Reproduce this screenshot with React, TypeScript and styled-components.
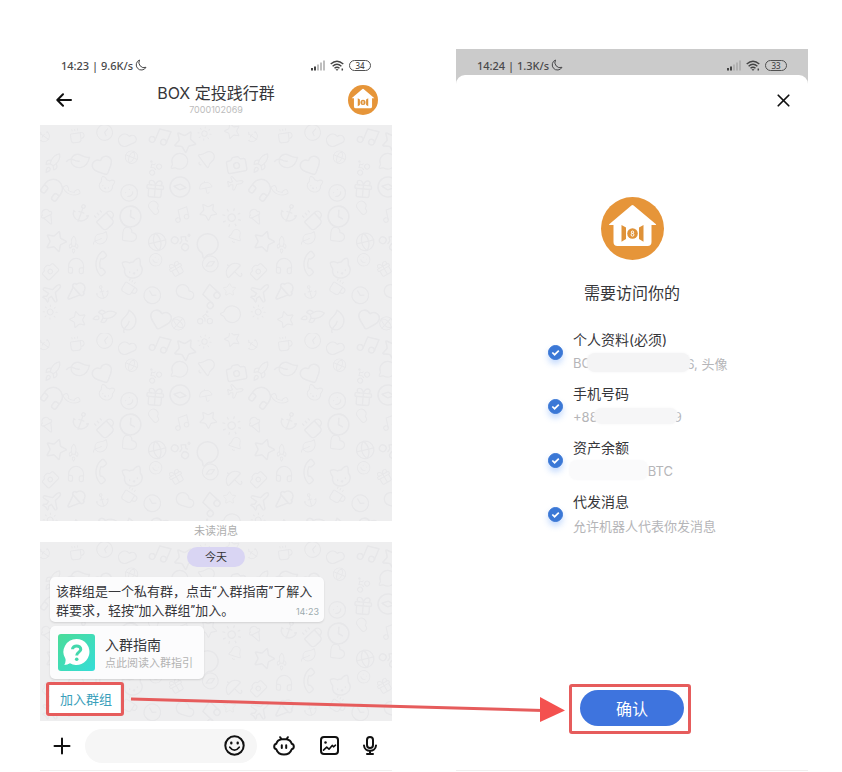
import React from 'react';
import styled, { createGlobalStyle, css } from 'styled-components';
import {
  Anchor, Bell, Bike, Camera, Cat, Clock, Cloud, Coffee, Compass, Gift, Globe, Headphones,
  Heart, IceCreamCone, Leaf, MessageCircle, Music, Phone, Plane, Rocket, Smile, Star, Sun, Umbrella, X,
} from 'lucide-react';

const GlobalStyle = createGlobalStyle`
  *, *::before, *::after { box-sizing: border-box; }
  body {
    margin: 0;
    background: #fff;
    color: #36363a;
    font-family: Inter, "Noto Sans CJK SC", sans-serif;
  }
  h1, h2, p, ul { margin: 0; padding: 0; font-weight: 400; }
  button, input { font: inherit; margin: 0; }
`;

const RED = '#e65c5c';

const Page = styled.main`
  position: relative;
  display: grid;
  grid-template-columns: 1fr 1fr;
  gap: 64px;
  min-height: 100vh;
  padding: 49px 34px 1px 40px;
`;

const Screen = styled.section<{ $dimmed?: boolean }>`
  display: flex;
  flex-direction: column;
  min-width: 0;
  border-bottom: 1px solid #f1efef;
  background: ${(p) => (p.$dimmed ? 'linear-gradient(#cbcbcb 60px, #fff 60px)' : '#fff')};
`;

const StatusBar = styled.div`
  display: flex;
  flex: none;
  align-items: center;
  justify-content: space-between;
  height: 32px;
  padding: 0 21px;
  font-family: "Noto Sans", sans-serif;
  font-size: 11px;
  font-weight: 500;
  color: #48484a;
`;

const StatusGroup = styled.div<{ $gap: number }>`
  display: flex;
  align-items: center;
  gap: ${(p) => p.$gap}px;
`;

const Battery = styled.span`
  width: 22px;
  height: 11px;
  border: 1px solid #505050;
  border-radius: 6px;
  font-size: 8px;
  line-height: 9px;
  text-align: center;
`;

const IconButton = styled.button<{ $width: number }>`
  display: flex;
  flex: none;
  align-items: center;
  justify-content: center;
  width: ${(p) => p.$width}px;
  height: 22px;
  padding: 0;
  border: 0;
  background: none;
  color: #111;
  cursor: pointer;
`;

const ChatHeader = styled.header`
  display: grid;
  flex: none;
  grid-template-columns: 30px 1fr 30px;
  align-items: center;
  height: 44px;
  padding: 0 14px 6px;
  text-align: center;
`;

const ChatTitle = styled.h1`
  font-size: 16px;
  line-height: 20px;
`;

const ChatId = styled.p`
  font-size: 9px;
  line-height: 14px;
  color: #bcbcbc;
`;

const Wallpaper = styled.div<{ $grow?: boolean }>`
  position: relative;
  flex: ${(p) => (p.$grow ? '1 0 160px' : 'none')};
  background: #eeeeef;
`;

const Doodles = styled.svg`
  position: absolute;
  inset: 0;
  width: 100%;
  height: 100%;
  color: #e7e7e9;
`;

const UnreadBar = styled.p`
  flex: none;
  font-size: 11px;
  line-height: 21px;
  text-align: center;
  color: #aeaeae;
`;

const Messages = styled.div`
  position: relative;
  display: flex;
  flex-direction: column;
  align-items: flex-start;
  padding: 5px 10px 8px;
`;

const DayPill = styled.span`
  align-self: center;
  padding: 0 18px;
  margin-bottom: 10px;
  border-radius: 10px;
  background: #d9d5f3;
  font-size: 11px;
  line-height: 20px;
  color: #333;
`;

const card = css`
  border-radius: 5px;
  background: #fcfcfd;
  box-shadow: 0 1px 2px rgba(0, 0, 0, 0.12);
`;

const Bubble = styled.article`
  ${card}
  position: relative;
  max-width: 274px;
  padding: 5px 6px 2px;
  margin-bottom: 4px;
  font-family: Roboto, "Noto Sans CJK SC", sans-serif;
  font-size: 13px;
  line-height: 19px;
`;

const BubbleTime = styled.time`
  position: absolute;
  right: 5px;
  bottom: 4px;
  font-family: Inter, sans-serif;
  font-size: 9px;
  line-height: 12px;
  color: #9cabae;
`;

const GuideCard = styled.a`
  ${card}
  display: flex;
  align-items: center;
  gap: 10px;
  height: 53px;
  padding: 0 11px 0 8px;
  margin-bottom: 6px;
  color: inherit;
  text-decoration: none;
`;

const GuideTitle = styled.h2`
  font-size: 14px;
  line-height: 20px;
`;

const GuideNote = styled.p`
  font-size: 11px;
  line-height: 16px;
  color: #b3b3b3;
`;

const Marked = styled.div`
  position: relative;
  display: flex;
`;

const MarkFrame = styled.span<{ $inset: string }>`
  position: absolute;
  inset: ${(p) => p.$inset};
  border: 3px solid ${RED};
  border-radius: 3px;
  pointer-events: none;
`;

const JoinButton = styled.button`
  height: 28px;
  padding: 0 8px 0 10px;
  border: 0;
  background: #fff;
  font-size: 13px;
  line-height: 26px;
  color: #3a9fbb;
  cursor: pointer;
`;

const Composer = styled.form`
  display: flex;
  flex: none;
  align-items: center;
  height: 49px;
  padding: 0 15px 0 11px;
`;

const Field = styled.label`
  display: flex;
  flex: 1;
  align-items: center;
  min-width: 0;
  height: 34px;
  margin: 0 16px 0 12px;
  padding-right: 12px;
  border-radius: 17px;
  background: #f6f6f6;
`;

const FieldInput = styled.input`
  flex: 1;
  min-width: 0;
  padding: 0 16px;
  border: 0;
  outline: 0;
  background: none;
  font-size: 13px;
`;

const Tools = styled.div`
  display: flex;
  align-items: center;
  gap: 24px;
`;

const Sheet = styled.div`
  display: flex;
  flex: 1;
  flex-direction: column;
  align-items: center;
  margin-top: -6px;
  padding: 14px 14px 44px;
  border-radius: 9px 9px 0 0;
  background: #fff;
`;

const SheetTop = styled.div`
  display: flex;
  align-self: stretch;
  justify-content: flex-end;
  margin-bottom: 86px;
`;

const SheetTitle = styled.h1`
  margin: 21px 0 23px;
  font-size: 16px;
  line-height: 24px;
`;

const Permissions = styled.ul`
  display: grid;
  align-self: stretch;
  gap: 6px;
  padding-left: 78px;
  list-style: none;
`;

const PermissionLabel = styled.label`
  display: flex;
  align-items: center;
  gap: 10px;
  height: 48px;
`;

const Tick = styled.span`
  position: relative;
  display: flex;
  width: 15px;
  height: 15px;
`;

const TickInput = styled.input`
  width: 15px;
  height: 15px;
  appearance: none;
  border: 1px solid #3b78d6;
  border-radius: 50%;
  background: #fff;
  box-shadow: 0 4px 6px rgba(70, 140, 250, 0.32);
  &:checked { background: #3b78d6; }
  &:checked + svg { visibility: visible; }
`;

const TickMark = styled.svg`
  position: absolute;
  inset: 0;
  visibility: hidden;
  pointer-events: none;
`;

const PermissionName = styled.span`
  display: block;
  font-size: 14px;
  line-height: 24px;
`;

const PermissionNote = styled.span`
  display: flex;
  align-items: center;
  height: 24px;
  padding-bottom: 2px;
  font-size: 13px;
  white-space: pre;
  color: #b5b5b8;
`;

const Smudge = styled.span<{ $width: number; $height: number; $tone: string }>`
  position: relative;
  width: ${(p) => p.$width}px;
  height: ${(p) => p.$height}px;
  margin: -2px -4px 0;
  border-radius: 8px;
  background: ${(p) => p.$tone};
  box-shadow: 0 0 3px ${(p) => p.$tone};
`;

const SheetFooter = styled.div`
  display: flex;
  justify-content: center;
  margin-top: auto;
`;

const ConfirmButton = styled.button`
  width: 104px;
  height: 36px;
  border: 0;
  border-radius: 18px;
  background: #3e74de;
  font-size: 16px;
  color: #fff;
  cursor: pointer;
`;

const Pointer = styled.svg`
  position: absolute;
  left: 131px;
  bottom: 48px;
  width: calc(50% + 14px);
  height: 30px;
  overflow: visible;
  pointer-events: none;
`;

const doodleIcons = [
  Anchor, Cat, Globe, Music, Umbrella, Camera, Rocket, Coffee, Smile, Bike, Star, Plane,
  Headphones, Leaf, Clock, Gift, MessageCircle, Sun, IceCreamCone, Phone, Heart, Cloud, Compass, Bell, Star,
];

const TILE = 208;
const doodles = Array.from({ length: 64 }, (_, i) => ({
  Icon: doodleIcons[(i * 7) % doodleIcons.length],
  x: (i % 8) * 26 + ((i * 5) % 7) - 2,
  y: Math.floor(i / 8) * 26 + ((i * 11) % 7) - 2,
  size: 15 + ((i * 13) % 11),
  angle: ((i * 47) % 110) - 55,
}));

function DoodleLayer({ id }: { id: string }) {
  return (
    <Doodles aria-hidden="true">
      <defs>
        <pattern id={id} width={TILE} height={TILE} patternUnits="userSpaceOnUse">
          {doodles.map(({ Icon, x, y, size, angle }, i) => (
            <g key={i} transform={`rotate(${angle} ${x + 12} ${y + 12})`}>
              <Icon x={x} y={y} size={size} strokeWidth={1.5} />
            </g>
          ))}
        </pattern>
      </defs>
      <rect width="100%" height="100%" fill={`url(#${id})`} />
    </Doodles>
  );
}

function HouseLogo({ size }: { size: number }) {
  return (
    <svg width={size} height={size} viewBox="0 0 63 63" aria-hidden="true">
      <circle cx="31.5" cy="31.5" r="31.5" fill="#e69539" />
      <path
        d="M30.4 8.6Q31.5 7.6 32.6 8.6L55 27.2Q55.5 28 54.5 28H50.5V45Q50.5 49 46.5 49H16.5Q12.5 49 12.5 45V28H8.5Q7.5 28 8.2 27.2Z"
        fill="#fff"
      />
      <path d="M20.5 28 25 30.5V42L20.5 44.8ZM42.5 28 38 30.5V42L42.5 44.8Z" fill="#df9238" />
      <circle cx="31.5" cy="36.500" r="5.3" fill="#df9238" />
      <circle cx="31.5" cy="35.200" r="1.200" fill="none" stroke="#fff" />
      <circle cx="31.5" cy="37.800" r="1.400" fill="none" stroke="#fff" />
    </svg>
  );
}

function Status({ text, battery }: { text: string; battery: string }) {
  return (
    <StatusBar>
      <StatusGroup $gap={2}>
        <span>{text}</span>
        <svg width="12" height="12" viewBox="0 0 12 12" fill="none" stroke="currentColor" strokeLinejoin="round">
          <path d="M4.5 1A5.2 5.2 0 1 0 11 8.3 5.2 5.2 0 0 1 4.5 1Z" />
        </svg>
      </StatusGroup>
      <StatusGroup $gap={5}>
        <svg width="14" height="11" viewBox="0 0 14 11" strokeWidth="2">
          <path d="M1 10.5V8M4 10.5V6.5" stroke="#444" />
          <path d="M7 10.5V4.5M10 10.5V2.5M13 10.5V.5" stroke="#a9a9a9" strokeWidth="1.5" />
        </svg>
        <svg width="14" height="11" viewBox="0 0 14 11" fill="none" stroke="#444" strokeWidth="1.4">
          <path d="M.7 4Q7-1.5 13.3 4M2.6 6.2Q7 2.3 11.4 6.2M4.5 8.3Q7 6 9.5 8.3" />
          <path d="M6 9.5h2L7 10.5Z" fill="#444" strokeWidth=".6" />
          <path d="M12.3 8.5v2" strokeWidth="1.5" />
        </svg>
        <Battery>{battery}</Battery>
      </StatusGroup>
    </StatusBar>
  );
}

function GuideIcon() {
  return (
    <svg width="37" height="37" viewBox="0 0 37 37" fill="none" aria-hidden="true">
      <defs>
        <linearGradient id="guide" x1="0" y1="0" x2="1" y2="1">
          <stop offset="0" stopColor="#4bdc98" />
          <stop offset="1" stopColor="#35ddd8" />
        </linearGradient>
      </defs>
      <rect width="37" height="37" rx="3" fill="url(#guide)" />
      <path d="M18.5 5A13 13 0 1 1 12 29.3Q9.5 31 6.3 31 8 28 7.5 25A13 13 0 0 1 18.5 5Z" fill="#fff" />
      <path d="M14.5 15.3C14.5 10.8 22.8 10.8 22.8 15.3 22.8 18.3 18.7 18 18.7 21.5" stroke="#43d8ac" strokeWidth="3" />
      <circle cx="18.7" cy="25.2" r="1.8" fill="#43d8ac" />
    </svg>
  );
}

const line = {
  fill: 'none',
  stroke: 'currentColor',
  strokeWidth: 2,
  strokeLinecap: 'round',
  strokeLinejoin: 'round',
} as const;

function ChatScreen() {
  return (
    <Screen>
      <Status text="14:23 | 9.6K/s" battery="34" />
      <ChatHeader>
        <IconButton type="button" $width={20} aria-label="返回">
          <svg width="16" height="14" viewBox="0 0 16 14" {...line}>
            <path d="M15 7H1.5M7 1.3 1.3 7 7 12.7" />
          </svg>
        </IconButton>
        <div>
          <ChatTitle>BOX 定投践行群</ChatTitle>
          <ChatId>7000102069</ChatId>
        </div>
        <HouseLogo size={30} />
      </ChatHeader>
      <Wallpaper $grow>
        <DoodleLayer id="doodle-top" />
      </Wallpaper>
      <UnreadBar>未读消息</UnreadBar>
      <Wallpaper>
        <DoodleLayer id="doodle-bottom" />
        <Messages>
          <DayPill>今天</DayPill>
          <Bubble>
            <p>该群组是一个私有群，点击“入群指南”了解入群要求，轻按“加入群组”加入。</p>
            <BubbleTime>14:23</BubbleTime>
          </Bubble>
          <GuideCard href="#guide">
            <GuideIcon />
            <div>
              <GuideTitle>入群指南</GuideTitle>
              <GuideNote>点此阅读入群指引</GuideNote>
            </div>
          </GuideCard>
          <Marked>
            <JoinButton type="button">加入群组</JoinButton>
            <MarkFrame $inset="-3px -4px" />
          </Marked>
        </Messages>
      </Wallpaper>
      <Composer onSubmit={(e) => e.preventDefault()}>
        <IconButton type="button" $width={22} aria-label="更多">
          <svg width="18" height="18" viewBox="0 0 18 18" {...line}>
            <path d="M9 1.5v15M1.5 9h15" />
          </svg>
        </IconButton>
        <Field>
          <FieldInput type="text" aria-label="消息" />
          <IconButton type="button" $width={22} aria-label="表情">
            <svg width="21" height="21" viewBox="0 0 21 21" {...line}>
              <circle cx="10.5" cy="10.5" r="9.2" />
              <path d="M5.8 12.2Q10.5 18.2 15.2 12.2" strokeWidth="1.7" />
              <path d="M7.3 7.8v.4M13.7 7.8v.4" strokeWidth="2.4" />
            </svg>
          </IconButton>
        </Field>
        <Tools>
          <IconButton type="button" $width={22} aria-label="机器人">
            <svg width="22" height="20" viewBox="0 0 22 20" {...line}>
              <path d="M7.2 1.2 8.5 3.2H13.500L14.800 1.2M8.5 3.2C5.5 3.800 3.800 5.500 3.300 7.800 .5 8.500.5 12.700 3.300 13.300 4.600 16.800 7.300 18.600 11 18.600S17.400 16.800 18.700 13.300C21.500 12.700 21.500 8.500 18.700 7.800 18.200 5.500 16.500 3.800 13.500 3.200" />
              <path d="M8.8 9.300v2.700M13.200 9.300v2.700" />
            </svg>
          </IconButton>
          <IconButton type="button" $width={20} aria-label="图片">
            <svg width="19" height="19" viewBox="0 0 19 19" {...line}>
              <rect x="1" y="1" width="17" height="17" rx="3" />
              <path d="m3.5 14.2 3.2-3 2.3 2 3.2-3.8 1.3 1.4 2-1.6" strokeWidth="1.6" />
              <path d="M5.5 6.5v.1" strokeWidth="2.5" />
            </svg>
          </IconButton>
          <IconButton type="button" $width={14} aria-label="语音">
            <svg width="14" height="19" viewBox="0 0 14 19" {...line}>
              <rect x="4" y="1" width="6" height="11" rx="3" />
              <path d="M1 9.5C1.5 16.5 12.5 16.5 13 9.5M7 15v3M4 18h6" />
            </svg>
          </IconButton>
        </Tools>
      </Composer>
    </Screen>
  );
}

const permissions: { name: string; note: React.ReactNode }[] = [
  { name: '个人资料(必须)', note: <>BO<Smudge $width={103} $height={19} $tone="#f4f4f5" />6, 头像</> },
  { name: '手机号码', note: <>+88<Smudge $width={84} $height={16} $tone="#f6f6f7" />9</> },
  { name: '资产余额', note: <><Smudge $width={79} $height={20} $tone="#fafafb" />{' '} BTC</> },
  { name: '代发消息', note: '允许机器人代表你发消息' },
];

function ConsentScreen() {
  return (
    <Screen $dimmed>
      <Status text="14:24 | 1.3K/s" battery="33" />
      <Sheet>
        <SheetTop>
          <IconButton type="button" $width={22} aria-label="关闭">
            <X size={21} strokeWidth={2} />
          </IconButton>
        </SheetTop>
        <HouseLogo size={63} />
        <SheetTitle>需要访问你的</SheetTitle>
        <Permissions>
          {permissions.map((p) => (
            <li key={p.name}>
              <PermissionLabel>
                <Tick>
                  <TickInput type="checkbox" defaultChecked />
                  <TickMark width="15" height="15" viewBox="0 0 15 15" fill="none" stroke="#fff" strokeWidth="1.7">
                    <path d="m4.3 7.5 2.3 2.2 4.2-4" />
                  </TickMark>
                </Tick>
                <span>
                  <PermissionName>{p.name}</PermissionName>
                  <PermissionNote>{p.note}</PermissionNote>
                </span>
              </PermissionLabel>
            </li>
          ))}
        </Permissions>
        <SheetFooter>
          <Marked>
            <ConfirmButton type="button">确认</ConfirmButton>
            <MarkFrame $inset="-6px -7px -8px -11px" />
          </Marked>
        </SheetFooter>
      </Sheet>
    </Screen>
  );
}

export default function App() {
  return (
    <>
      <GlobalStyle />
      <Page>
        <ChatScreen />
        <ConsentScreen />
        <Pointer viewBox="0 0 435 30" preserveAspectRatio="xMaxYMid meet" aria-hidden="true">
          <path d="M0 5 412 16.5" stroke={RED} strokeWidth="3" />
          <path d="M409 3 434 16.5 409 28Z" fill="#f4514f" />
        </Pointer>
      </Page>
    </>
  );
}
